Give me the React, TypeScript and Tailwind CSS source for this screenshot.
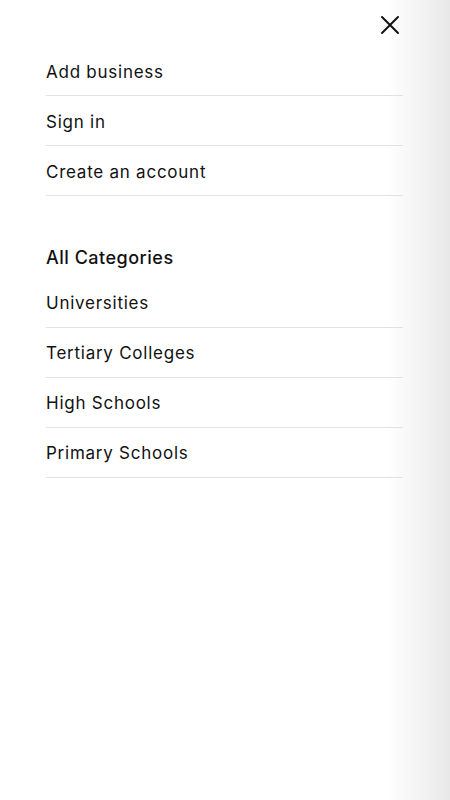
import React from "react";

const top = ["Add business", "Sign in", "Create an account"];
const cats = ["Universities", "Tertiary Colleges", "High Schools", "Primary Schools"];

export default function App() {
  return (
    <div
      className="relative w-[450px] h-[800px] bg-white overflow-hidden text-[#111111]"
      style={{ fontFamily: "Inter, 'Open Sans', sans-serif" }}
    >
      <div className="absolute top-0 right-0 h-full w-[62px] bg-gradient-to-r from-white to-[#e8e8e8] pointer-events-none" />
      <div className="relative ml-[46px] w-[357px]">
        <div className="h-[46px] flex items-center justify-end pr-[3px] pt-[3px]">
          <svg width="20" height="20" viewBox="0 0 20 20" fill="none" stroke="#111" strokeWidth="2" strokeLinecap="round">
            <path d="M2 2 L18 18 M18 2 L2 18" />
          </svg>
        </div>
        {top.map((t) => (
          <div key={t} className="h-[50px] flex items-center pt-[3px] border-b border-[#e2e2e2] text-[17px] tracking-[0.75px] leading-none">
            {t}
          </div>
        ))}
        <div className="mt-[50px] h-[24px] flex items-center text-[18px] tracking-[0.5px] font-medium leading-none">All Categories</div>
        <div className="h-[8px]" />
        {cats.map((t) => (
          <div key={t} className="h-[50px] flex items-center pt-[2px] border-b border-[#e2e2e2] text-[17px] tracking-[0.75px] leading-none">
            {t}
          </div>
        ))}
      </div>
    </div>
  );
}
